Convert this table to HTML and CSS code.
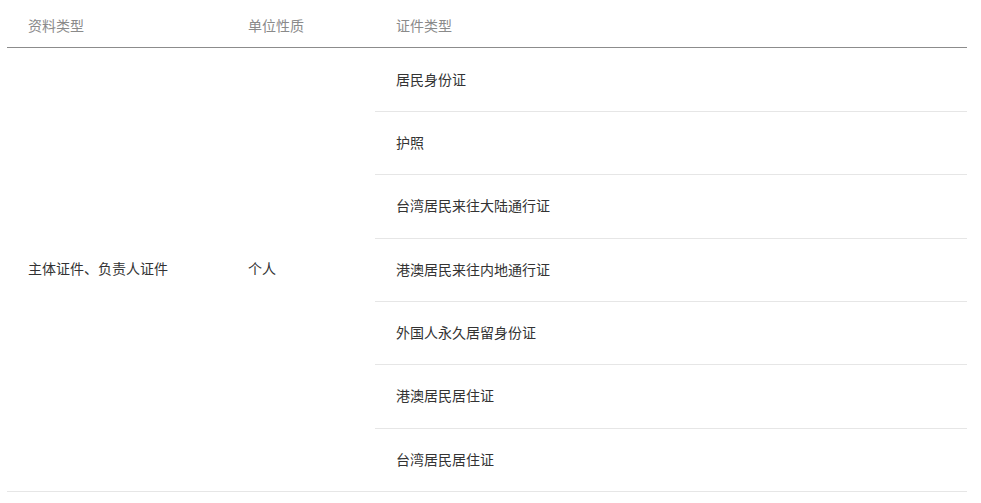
FILE: index.html
```html
<!DOCTYPE html>
<html lang="zh-CN">
<head>
<meta charset="utf-8">
<link rel="stylesheet" href="styles.css">
</head>
<body>
<div class="table">
  <div class="th">资料类型</div>
  <div class="th">单位性质</div>
  <div class="th">证件类型</div>
  <div class="td span">主体证件、负责人证件</div>
  <div class="td span">个人</div>
  <div class="td">居民身份证</div>
  <div class="td">护照</div>
  <div class="td">台湾居民来往大陆通行证</div>
  <div class="td">港澳居民来往内地通行证</div>
  <div class="td">外国人永久居留身份证</div>
  <div class="td">港澳居民居住证</div>
  <div class="td">台湾居民居住证</div>
</div>
</body>
</html>
```
FILE: styles.css
```css
html, body {
  margin: 0;
  padding: 0;
  background: #fff;
}
body {
  font-family: "Noto Sans CJK SC", "Noto Sans", sans-serif;
  font-size: 14px;
}
.table {
  margin: 0 14px 0 7px;
  width: 960px;
  display: grid;
  grid-template-columns: 220px 148px 1fr;
  grid-template-rows: 48px 64px;
  grid-auto-rows: 63.33px;
}
.th {
  box-sizing: border-box;
  padding: 15px 21px 0;
  line-height: 20px;
  color: #8a8a8a;
  border-bottom: 1px solid #8c8c8c;
}
.td {
  box-sizing: border-box;
  padding: 0 21px 2px;
  display: flex;
  align-items: center;
  color: #333;
  border-bottom: 1px solid #e6e6e6;
  grid-column: 3;
}
.td.span {
  grid-row: 2 / span 7;
}
.td.span:nth-child(4) { grid-column: 1; }
.td.span:nth-child(5) { grid-column: 2; }
```
